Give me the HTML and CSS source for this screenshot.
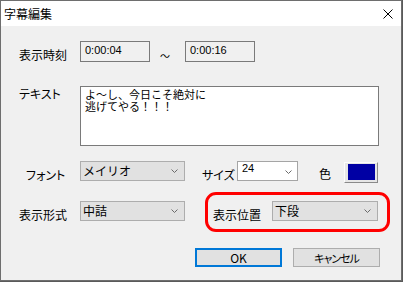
FILE: index.html
```html
<!DOCTYPE html>
<html lang="ja">
<head>
    <meta charset="UTF-8">
    <title>字幕編集</title>
    <link rel="stylesheet" href="styles.css">
</head>
<body>
    <div class="window">
        <div class="titlebar">
            <span class="title">字幕編集</span>
            <svg class="close" width="10" height="10" viewBox="0 0 10 10">
                <path d="M0.5 0.5L9.5 9.5M9.5 0.5L0.5 9.5" stroke="#000" stroke-width="1" fill="none"/>
            </svg>
        </div>

        <div class="content">
            <!-- Time range -->
            <div class="row row-time">
                <span class="label">表示時刻</span>
                <div class="timebox">0:00:04</div>
                <span class="tilde">～</span>
                <div class="timebox">0:00:16</div>
            </div>

            <!-- Caption text -->
            <div class="row row-text">
                <span class="label">テキスト</span>
                <div class="textbox">よ～し、今日こそ絶対に
逃げてやる！！！</div>
            </div>

            <!-- Font, size, colour -->
            <div class="row row-font">
                <span class="label label-indent">フォント</span>
                <div class="combo combo-wide">
                    <span class="combo-text">メイリオ</span>
                    <svg class="chevron" width="7" height="4" viewBox="0 0 7 4"><polyline points="0.5,0.5 3.5,3.5 6.5,0.5" stroke="#6a6a6a" fill="none"/></svg>
                </div>
                <span class="label-size">サイズ</span>
                <div class="combo combo-size">
                    <span class="combo-text">24</span>
                    <svg class="chevron" width="7" height="4" viewBox="0 0 7 4"><polyline points="0.5,0.5 3.5,3.5 6.5,0.5" stroke="#6a6a6a" fill="none"/></svg>
                </div>
                <span class="label-color">色</span>
                <div class="color-btn"><div class="swatch"></div></div>
            </div>

            <!-- Display format and position -->
            <div class="row row-pos">
                <span class="label">表示形式</span>
                <div class="combo combo-wide">
                    <span class="combo-text">中詰</span>
                    <svg class="chevron" width="7" height="4" viewBox="0 0 7 4"><polyline points="0.5,0.5 3.5,3.5 6.5,0.5" stroke="#6a6a6a" fill="none"/></svg>
                </div>
                <div class="highlight">
                    <span class="label-pos">表示位置</span>
                    <div class="combo combo-pos">
                        <span class="combo-text">下段</span>
                        <svg class="chevron" width="7" height="4" viewBox="0 0 7 4"><polyline points="0.5,0.5 3.5,3.5 6.5,0.5" stroke="#6a6a6a" fill="none"/></svg>
                    </div>
                </div>
            </div>

            <div class="buttons">
                <button class="btn btn-ok">OK</button>
                <button class="btn btn-cancel">キャンセル</button>
            </div>
        </div>
    </div>
</body>
</html>
```

FILE: styles.css
```css
body {
    margin: 0;
    background: #5a5a5a;
    font-family: "Noto Sans CJK JP", sans-serif;
    font-size: 12px;
    color: #000;
}

/* Dialog frame */
.window {
    width: 402px;
    height: 281px;
    box-sizing: border-box;
    border: 1px solid #6e6e6e;
    background: #f0f0f0;
}

.titlebar {
    height: 25px;
    background: #fff;
    display: flex;
    align-items: center;
    justify-content: space-between;
    padding: 0 8px 0 3px;
}

.title {
    line-height: 25px;
}

.content {
    padding: 15px 0 0 18px;
}

.row {
    display: flex;
    align-items: flex-start;
}

.label {
    width: 61px;
    flex: none;
    line-height: 14px;
    padding-top: 7px;
    font-feature-settings: "palt";
}

.label-indent {
    box-sizing: border-box;
    padding-left: 7px;
}

/* Time row */
.timebox {
    width: 70px;
    height: 21px;
    box-sizing: border-box;
    border: 1px solid #7a7a7a;
    padding: 2px 0 0 4px;
    font-family: "Liberation Sans", Arial, sans-serif;
    font-size: 11px;
    line-height: 13px;
}

.tilde {
    width: 35px;
    box-sizing: border-box;
    padding: 9px 0 0 10px;
    font-size: 10px;
    line-height: 12px;
}

/* Text row */
.row-text {
    margin-top: 24px;
}

.row-text .label {
    padding-top: 1px;
}

.textbox {
    width: 299px;
    height: 60px;
    box-sizing: border-box;
    border: 1px solid #7a7a7a;
    background: #fff;
    padding: 1px 0 0 4px;
    font-size: 11px;
    line-height: 12px;
    white-space: pre;
}

/* Combo boxes */
.combo {
    height: 20px;
    box-sizing: border-box;
    border: 1px solid #adadad;
    background: #e1e1e1;
    display: flex;
    align-items: center;
    justify-content: space-between;
    padding: 0 6px 0 2px;
    flex: none;
}

.combo-text {
    line-height: 14px;
}

.combo-wide {
    width: 105px;
}

.combo-pos {
    width: 106px;
}

.combo-size {
    width: 61px;
    background: #fff;
    border-color: #a5a5a5;
    align-items: flex-start;
    padding: 0 5px 0 4px;
}

.combo-size .combo-text {
    font-family: "Liberation Sans", Arial, sans-serif;
    font-size: 11px;
    line-height: 13px;
}

.combo-size .chevron {
    margin-top: 8px;
}

.row-font {
    margin-top: 15px;
}

.label-size {
    width: 35px;
    margin-left: 17px;
    padding-top: 7px;
    line-height: 14px;
    font-feature-settings: "palt";
}

.label-color {
    width: 25px;
    margin-left: 21px;
    padding-top: 6px;
    line-height: 14px;
}

.color-btn {
    width: 34px;
    height: 21px;
    margin-top: 1px;
    box-sizing: border-box;
    border: 1px solid;
    border-color: #fdfdfd #8a8a8a #8a8a8a #fdfdfd;
    background: #e6e6e6;
    padding: 1px 2px 2px 3px;
}

.swatch {
    height: 100%;
    background: #0000a4;
}

/* Format / position row */
.row-pos {
    margin-top: 18px;
}

.highlight {
    display: flex;
    align-items: flex-start;
    margin: -9px 0 -9px 20px;
    border: 3px solid #ff0000;
    border-radius: 11px;
    padding: 6px 9px 7px 5px;
}

.label-pos {
    width: 59px;
    padding-top: 7px;
    line-height: 14px;
}

/* Buttons */
.buttons {
    display: flex;
    justify-content: flex-end;
    gap: 11px;
    margin-top: 25px;
    padding-right: 21px;
}

.btn {
    width: 87px;
    height: 19px;
    box-sizing: border-box;
    border: 1px solid #adadad;
    background: #e1e1e1;
    font-family: "Noto Sans CJK JP", sans-serif;
    font-size: 12px;
    line-height: 14px;
    padding: 0;
    color: #000;
}

.btn-ok {
    border: 2px solid #0078d7;
}

.btn-cancel {
    font-size: 11px;
    font-feature-settings: "palt";
    letter-spacing: -1px;
}
```
